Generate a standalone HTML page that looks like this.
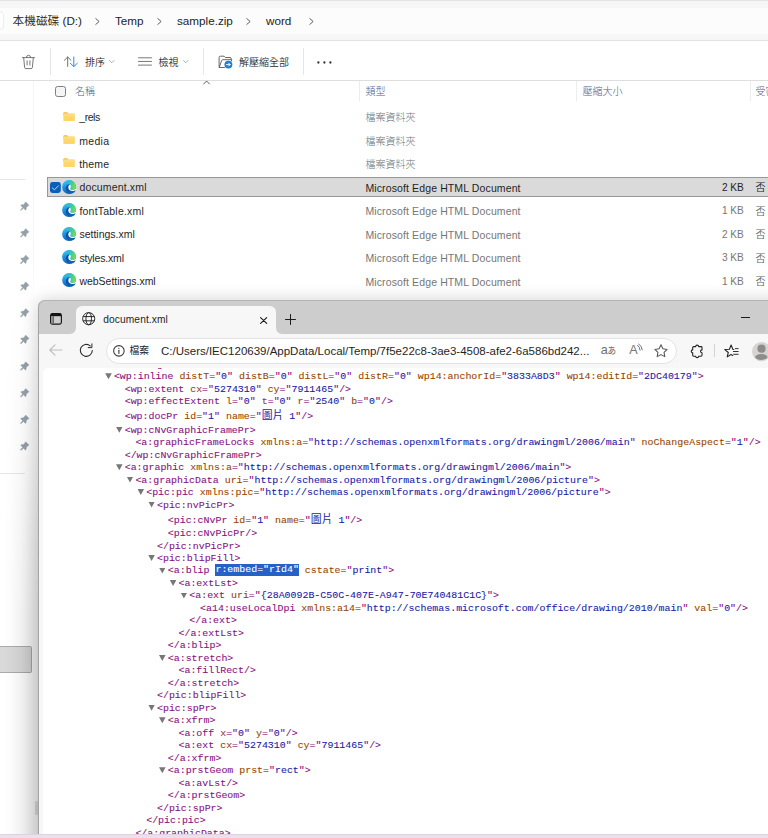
<!DOCTYPE html>
<html lang="zh-Hant">
<head>
<meta charset="utf-8">
<title>document.xml</title>
<style>
html,body{margin:0;padding:0}
body{width:768px;height:838px;overflow:hidden;position:relative;background:#fff;
  font-family:"Liberation Sans","Noto Sans CJK TC",sans-serif;color:#1b1b1b}
.abs{position:absolute}
.t{position:absolute;white-space:pre;line-height:14px}
svg{position:absolute;overflow:visible}

/* ---------- Explorer ---------- */
#addr{left:0;top:0;width:768px;height:41px;background:#f6f6f6}
#addr .topline{left:0;top:0;width:768px;height:1px;background:#e4e4e4}
#addr .box{left:-10px;top:7.5px;width:800px;height:26.5px;background:#fcfcfc}
#addr .pill{left:-8px;top:11px;width:12px;height:19px;background:#fff;border:1px solid #ededed;border-radius:4px;box-sizing:border-box}
#addr .botline{left:0;top:40.4px;width:768px;height:1px;background:#e3e3e3}
.crumb{font-size:11.7px;top:14.3px;color:#242424;font-weight:350}

#tb{left:0;top:41px;width:768px;height:39px;background:#fff}
#tb .botline{left:0;top:39px;width:768px;height:1px;background:#dedede}
.tbt{font-size:10px;top:15px;color:#2a2a2a;font-weight:350}
.vsep{width:1px;background:#e6e6e6;top:7px;height:27px}

#list{left:0;top:81px;width:768px;height:757px;background:#fff}
.hdr{font-size:10px;color:#506088;top:4.4px;font-weight:300}
.hsep{top:0;width:1.3px;height:20px;background:#ededed}
.fn{font-size:10.5px;letter-spacing:.2px;color:#262626}
.ft{font-size:10.5px;letter-spacing:.12px;color:#767676}
.fz{font-size:10.1px;color:#767676;text-align:right;width:40px}
.fld{font-size:10px;color:#727272;font-weight:300}

/* ---------- Edge ---------- */
#edge{left:38px;top:300px;width:760px;height:560px;background:#f7f7f7;border-radius:7px 0 0 0;
  box-shadow:0 0 17px rgba(0,0,0,.18)}
#tabstrip{left:0;top:0;width:760px;height:34px;background:#cdcdcd;border-radius:7px 0 0 0}
#tab{left:38.2px;top:6.2px;width:199.8px;height:28px;background:#f7f7f7;border-radius:6px 6px 0 0}
#page{left:5px;top:68px;width:760px;height:500px;background:#fff;border-radius:5px 0 0 0;overflow:hidden}
#url{left:68px;top:38px;width:571px;height:25.5px;background:#fff;border-radius:13px;box-sizing:border-box;border:1px solid #e3e3e3}
.xml{font-family:"Liberation Mono","Noto Sans CJK TC",monospace;font-size:9.93px;line-height:12.5px;white-space:pre;position:absolute;color:#881280;-webkit-text-stroke:.09px}
.xml .cj{font-size:10.85px;line-height:0;-webkit-text-stroke:0}
.xml .n{color:#994500}
.xml .v{color:#1a1aa6}
.xml .sel{background:#2561c6;color:#fff;display:inline-block;height:12px;line-height:12px;vertical-align:top;margin-top:-1.1px}
.xml .sel .n,.xml .sel .v{color:#fff}
.tri{position:absolute;width:6.6px;height:6px;background:#777;clip-path:polygon(0 0,100% 0,50% 100%)}
</style>
</head>
<body>

<!-- ================= Explorer address bar ================= -->
<div id="addr" class="abs">
  <div class="abs topline"></div>
  <div class="abs box"></div>
  <div class="abs pill"></div>
  <div class="abs botline"></div>
  <span class="t crumb" style="left:12.5px">本機磁碟 (D:)</span>
  <svg class="chev" style="left:95.2px;top:17.5px" width="5" height="7" viewBox="0 0 5 7" fill="none" stroke="#555" stroke-width="0.95" stroke-linecap="round" stroke-linejoin="round"><path d="M.8.6l3.3 2.9L.8 6.4"/></svg>
  <span class="t crumb" style="left:115px">Temp</span>
  <svg class="chev" style="left:157.3px;top:17.5px" width="5" height="7" viewBox="0 0 5 7" fill="none" stroke="#555" stroke-width="0.95" stroke-linecap="round" stroke-linejoin="round"><path d="M.8.6l3.3 2.9L.8 6.4"/></svg>
  <span class="t crumb" style="left:177px">sample.zip</span>
  <svg class="chev" style="left:246.3px;top:17.5px" width="5" height="7" viewBox="0 0 5 7" fill="none" stroke="#555" stroke-width="0.95" stroke-linecap="round" stroke-linejoin="round"><path d="M.8.6l3.3 2.9L.8 6.4"/></svg>
  <span class="t crumb" style="left:266px">word</span>
  <svg class="chev" style="left:309.3px;top:17.5px" width="5" height="7" viewBox="0 0 5 7" fill="none" stroke="#555" stroke-width="0.95" stroke-linecap="round" stroke-linejoin="round"><path d="M.8.6l3.3 2.9L.8 6.4"/></svg>
</div>

<!-- ================= Explorer toolbar ================= -->
<div id="tb" class="abs">
  <div class="abs botline"></div>
  
  <!-- trash -->
  <svg style="left:21px;top:13px" width="15" height="16" viewBox="0 0 15 16" fill="none" stroke="#6e6e6e" stroke-width=".95" stroke-linecap="round" stroke-linejoin="round">
    <path d="M1.5 3.6h12"/><path d="M5.4 3.4a2.1 2.1 0 0 1 4.2 0"/>
    <path d="M2.7 3.8l.9 9.6a1.3 1.3 0 0 0 1.3 1.2h5.2a1.3 1.3 0 0 0 1.3-1.2l.9-9.6"/>
    <path d="M6.1 6.8v4.2"/><path d="M8.9 6.8v4.2"/>
  </svg>
  <!-- sort -->
  <svg style="left:63px;top:15px" width="16" height="12" viewBox="0 0 16 12" fill="none" stroke-width=".95" stroke-linecap="round" stroke-linejoin="round">
    <path d="M4.7 10.4V1.1M1.4 4.3l3.3-3.3 3.3 3.3" stroke="#686868"/>
    <path d="M10.8 1v9.4M7.3 7.2l3.5 3.4 3.5-3.4" stroke="#2285dd"/>
  </svg>
  <svg style="left:108.6px;top:19px" width="5.5" height="3.7" viewBox="0 0 6 4" fill="none" stroke="#9c9c9c" stroke-width="0.9" stroke-linecap="round" stroke-linejoin="round"><path d="M.6.6L3 3l2.4-2.4"/></svg>
  <!-- view -->
  <svg style="left:138px;top:16px" width="14" height="9" viewBox="0 0 14 9" fill="none" stroke="#5e5e5e" stroke-width=".85" stroke-linecap="round"><path d="M.5.8h13M.5 4.45h13M.5 8.1h13"/></svg>
  <svg style="left:182.8px;top:19px" width="5.5" height="3.7" viewBox="0 0 6 4" fill="none" stroke="#9c9c9c" stroke-width="0.9" stroke-linecap="round" stroke-linejoin="round"><path d="M.6.6L3 3l2.4-2.4"/></svg>
  <!-- extract all -->
  <svg style="left:217.5px;top:14px" width="15" height="14" viewBox="0 0 15 14" fill="none" stroke-linejoin="round" stroke-linecap="round">
    <path d="M1.1 11.4V2.5A1.3 1.3 0 0 1 2.4 1.2h3.7l1.2 1.3h4.7a1.2 1.2 0 0 1 1.2 1.2v.9" stroke="#606060" stroke-width=".95"/>
    <path d="M1.3 12.3L3.7 5.4a1 1 0 0 1 .95-.7h9.2l-.5 1.4" stroke="#606060" stroke-width=".95"/>
    <path d="M1.3 12.5h5.2" stroke="#606060" stroke-width=".95"/>
    <circle cx="10.4" cy="9.6" r="3.95" fill="#1a7edb"/>
    <path d="M8.5 9.6h3.5M10.7 8.2l1.4 1.4-1.4 1.4" stroke="#fff" stroke-width=".95"/>
  </svg>
  <!-- more -->
  <svg style="left:317px;top:20px" width="15" height="3" viewBox="0 0 15 3"><circle cx="1.4" cy="1.5" r="1.15" fill="#333"/><circle cx="7.4" cy="1.5" r="1.15" fill="#333"/><circle cx="13.4" cy="1.5" r="1.15" fill="#333"/></svg>

  <div class="abs vsep" style="left:50px"></div>
  <span class="t tbt" style="left:85px">排序</span>
  <span class="t tbt" style="left:158.5px">檢視</span>
  <div class="abs vsep" style="left:203px"></div>
  <span class="t tbt" style="left:239px">解壓縮全部</span>
  <div class="abs vsep" style="left:303px"></div>
</div>

<!-- ================= Explorer file list ================= -->
<div id="list" class="abs">
  <div class="abs hsep" style="left:358.9px"></div><div class="abs hsep" style="left:575.7px"></div><div class="abs hsep" style="left:749.6px"></div>
  <div class="abs" style="left:55px;top:5px;width:11px;height:11px;box-sizing:border-box;border:1.05px solid #7e7e7e;border-radius:2.6px;background:#f5f5f5"></div>
  <span class="t hdr" style="left:75px">名稱</span>
  <span class="t hdr" style="left:365.5px">類型</span>
  <span class="t hdr" style="left:582.5px">壓縮大小</span>
  <span class="t hdr" style="left:755.5px">受密碼保護</span>
  <svg style="left:203.4px;top:-.6px" width="7.2" height="4.6" viewBox="0 0 7.2 4.6" fill="none" stroke="#5c5c5c" stroke-width="1" stroke-linecap="round" stroke-linejoin="round"><path d="M.7 4L3.6 1l2.9 3"/></svg>
  <div class="abs" style="left:46.8px;top:96px;width:740px;height:19.8px;box-sizing:border-box;background:#dadada;border:.9px solid #989898"></div>
  <svg style="left:50px;top:100.8px" width="10.8" height="11" viewBox="0 0 10.8 11"><rect width="10.8" height="11" rx="2.4" fill="#0b5fb9"/><path d="M2.4 6l2.1 1.75 3.9-3.95" fill="none" stroke="#e3ecf7" stroke-width=".85" stroke-linecap="round" stroke-linejoin="round"/></svg>
  <svg style="left:62.9px;top:30.6px" width="12.2" height="9.4" viewBox="0 0 13 10">
    <path d="M.4 1.2A.9.9 0 0 1 1.3.3h3.1l1.3 1.2H6V4H.4z" fill="#f2b632"/>
    <rect x=".4" y="1.6" width="12.2" height="8.1" rx=".9" fill="#ffd766"/>
    <rect x=".4" y="1.6" width="12.2" height="3" rx=".9" fill="#ffe08a" opacity=".7"/>
  </svg>
  <span class="t fn" style="left:79.3px;top:29.1px;letter-spacing:-0.45px">_rels</span>
  <span class="t fld" style="left:365.5px;top:30.1px">檔案資料夾</span>
  <svg style="left:62.9px;top:54px" width="12.2" height="9.4" viewBox="0 0 13 10">
    <path d="M.4 1.2A.9.9 0 0 1 1.3.3h3.1l1.3 1.2H6V4H.4z" fill="#f2b632"/>
    <rect x=".4" y="1.6" width="12.2" height="8.1" rx=".9" fill="#ffd766"/>
    <rect x=".4" y="1.6" width="12.2" height="3" rx=".9" fill="#ffe08a" opacity=".7"/>
  </svg>
  <span class="t fn" style="left:79.3px;top:52.5px;letter-spacing:0.28px">media</span>
  <span class="t fld" style="left:365.5px;top:53.5px">檔案資料夾</span>
  <svg style="left:62.9px;top:77.4px" width="12.2" height="9.4" viewBox="0 0 13 10">
    <path d="M.4 1.2A.9.9 0 0 1 1.3.3h3.1l1.3 1.2H6V4H.4z" fill="#f2b632"/>
    <rect x=".4" y="1.6" width="12.2" height="8.1" rx=".9" fill="#ffd766"/>
    <rect x=".4" y="1.6" width="12.2" height="3" rx=".9" fill="#ffe08a" opacity=".7"/>
  </svg>
  <span class="t fn" style="left:79.3px;top:75.9px;letter-spacing:0.16px">theme</span>
  <span class="t fld" style="left:365.5px;top:76.9px">檔案資料夾</span>
  <svg style="left:62.2px;top:98.8px" width="14" height="14" viewBox="0 0 14 14">
    <defs>
      <linearGradient id="ea98" x1=".25" y1="0" x2=".6" y2="1"><stop offset="0" stop-color="#3fc6f3"/><stop offset=".45" stop-color="#1b8fe0"/><stop offset="1" stop-color="#0d5cae"/></linearGradient>
      <linearGradient id="eb98" x1="0" y1=".35" x2="1" y2=".55"><stop offset="0" stop-color="#30b6ea"/><stop offset=".35" stop-color="#2fbad2"/><stop offset=".65" stop-color="#40cc98"/><stop offset="1" stop-color="#7be241"/></linearGradient>
      <linearGradient id="ec98" x1=".2" y1="0" x2=".8" y2="1"><stop offset="0" stop-color="#0b4a97"/><stop offset="1" stop-color="#1467bd"/></linearGradient>
    </defs>
    <circle cx="7" cy="7" r="6.9" fill="url(#ea98)"/>
    <path d="M8.2 4.6C5.5 4.4 3.6 6.6 3.9 9.2 4.2 12 7 14 10 13.4 12 13 13.2 11.6 13.6 10 12.6 10.8 11.2 11 10 11 7.6 10.8 6.2 9 6.4 7.3 6.5 6 7.2 5 8.2 4.6z" fill="url(#ec98)"/>
    <path d="M1.3 4.9C2.5 2 5.2 .100 8 .2 11.5.5 14 3.5 13.9 7 13.85 9 12.4 10 10.8 10 9 10 8.2 9.2 8.2 8.4 8.2 7.8 8.8 7.4 8.8 6.4 8.8 4.8 7.3 3.6 5.4 3.6 3.8 3.6 2.3 4.1 1.3 4.9z" fill="url(#eb98)"/>
    <path d="M8.25 8.4C8.25 9.25 9.1 10.05 10.8 10.05 11.6 10.05 12.5 9.8 13.3 9.1L14.3 8.9 14.3 10 13.7 9.9C12.7 10.8 11.2 11.05 10 11.05 7.6 10.85 6.15 9 6.35 7.3 6.45 6 7.15 5 8.15 4.55 8.6 5.1 8.85 5.8 8.85 6.4 8.85 7.4 8.25 7.8 8.25 8.4z" fill="#fff"/>
  </svg>
  <span class="t fn" style="left:79.4px;top:99.3px;letter-spacing:0.16px">document.xml</span>
  <span class="t ft" style="left:365.4px;top:100px;color:#1f1f1f">Microsoft Edge HTML Document</span>
  <span class="t fz" style="left:703.8px;top:100px;color:#1f1f1f">2 KB</span>
  <span class="t fld" style="left:755.5px;top:100.3px;color:#222;font-weight:350">否</span>
  <svg style="left:62.2px;top:122.2px" width="14" height="14" viewBox="0 0 14 14">
    <defs>
      <linearGradient id="ea122" x1=".25" y1="0" x2=".6" y2="1"><stop offset="0" stop-color="#3fc6f3"/><stop offset=".45" stop-color="#1b8fe0"/><stop offset="1" stop-color="#0d5cae"/></linearGradient>
      <linearGradient id="eb122" x1="0" y1=".35" x2="1" y2=".55"><stop offset="0" stop-color="#30b6ea"/><stop offset=".35" stop-color="#2fbad2"/><stop offset=".65" stop-color="#40cc98"/><stop offset="1" stop-color="#7be241"/></linearGradient>
      <linearGradient id="ec122" x1=".2" y1="0" x2=".8" y2="1"><stop offset="0" stop-color="#0b4a97"/><stop offset="1" stop-color="#1467bd"/></linearGradient>
    </defs>
    <circle cx="7" cy="7" r="6.9" fill="url(#ea122)"/>
    <path d="M8.2 4.6C5.5 4.4 3.6 6.6 3.9 9.2 4.2 12 7 14 10 13.4 12 13 13.2 11.6 13.6 10 12.6 10.8 11.2 11 10 11 7.6 10.8 6.2 9 6.4 7.3 6.5 6 7.2 5 8.2 4.6z" fill="url(#ec122)"/>
    <path d="M1.3 4.9C2.5 2 5.2 .100 8 .2 11.5.5 14 3.5 13.9 7 13.85 9 12.4 10 10.8 10 9 10 8.2 9.2 8.2 8.4 8.2 7.8 8.8 7.4 8.8 6.4 8.8 4.8 7.3 3.6 5.4 3.6 3.8 3.6 2.3 4.1 1.3 4.9z" fill="url(#eb122)"/>
    <path d="M8.25 8.4C8.25 9.25 9.1 10.05 10.8 10.05 11.6 10.05 12.5 9.8 13.3 9.1L14.3 8.9 14.3 10 13.7 9.9C12.7 10.8 11.2 11.05 10 11.05 7.6 10.85 6.15 9 6.35 7.3 6.45 6 7.15 5 8.15 4.55 8.6 5.1 8.85 5.8 8.85 6.4 8.85 7.4 8.25 7.8 8.25 8.4z" fill="#fff"/>
  </svg>
  <span class="t fn" style="left:79.4px;top:122.7px;letter-spacing:0.22px">fontTable.xml</span>
  <span class="t ft" style="left:365.4px;top:123.4px">Microsoft Edge HTML Document</span>
  <span class="t fz" style="left:703.8px;top:123.4px">1 KB</span>
  <span class="t fld" style="left:755.5px;top:123.7px;color:#636363;font-weight:350">否</span>
  <svg style="left:62.2px;top:145.6px" width="14" height="14" viewBox="0 0 14 14">
    <defs>
      <linearGradient id="ea145" x1=".25" y1="0" x2=".6" y2="1"><stop offset="0" stop-color="#3fc6f3"/><stop offset=".45" stop-color="#1b8fe0"/><stop offset="1" stop-color="#0d5cae"/></linearGradient>
      <linearGradient id="eb145" x1="0" y1=".35" x2="1" y2=".55"><stop offset="0" stop-color="#30b6ea"/><stop offset=".35" stop-color="#2fbad2"/><stop offset=".65" stop-color="#40cc98"/><stop offset="1" stop-color="#7be241"/></linearGradient>
      <linearGradient id="ec145" x1=".2" y1="0" x2=".8" y2="1"><stop offset="0" stop-color="#0b4a97"/><stop offset="1" stop-color="#1467bd"/></linearGradient>
    </defs>
    <circle cx="7" cy="7" r="6.9" fill="url(#ea145)"/>
    <path d="M8.2 4.6C5.5 4.4 3.6 6.6 3.9 9.2 4.2 12 7 14 10 13.4 12 13 13.2 11.6 13.6 10 12.6 10.8 11.2 11 10 11 7.6 10.8 6.2 9 6.4 7.3 6.5 6 7.2 5 8.2 4.6z" fill="url(#ec145)"/>
    <path d="M1.3 4.9C2.5 2 5.2 .100 8 .2 11.5.5 14 3.5 13.9 7 13.85 9 12.4 10 10.8 10 9 10 8.2 9.2 8.2 8.4 8.2 7.8 8.8 7.4 8.8 6.4 8.8 4.8 7.3 3.6 5.4 3.6 3.8 3.6 2.3 4.1 1.3 4.9z" fill="url(#eb145)"/>
    <path d="M8.25 8.4C8.25 9.25 9.1 10.05 10.8 10.05 11.6 10.05 12.5 9.8 13.3 9.1L14.3 8.9 14.3 10 13.7 9.9C12.7 10.8 11.2 11.05 10 11.05 7.6 10.85 6.15 9 6.35 7.3 6.45 6 7.15 5 8.15 4.55 8.6 5.1 8.85 5.8 8.85 6.4 8.85 7.4 8.25 7.8 8.25 8.4z" fill="#fff"/>
  </svg>
  <span class="t fn" style="left:79.4px;top:146.1px;letter-spacing:0px">settings.xml</span>
  <span class="t ft" style="left:365.4px;top:146.8px">Microsoft Edge HTML Document</span>
  <span class="t fz" style="left:703.8px;top:146.8px">2 KB</span>
  <span class="t fld" style="left:755.5px;top:147.1px;color:#636363;font-weight:350">否</span>
  <svg style="left:62.2px;top:169px" width="14" height="14" viewBox="0 0 14 14">
    <defs>
      <linearGradient id="ea169" x1=".25" y1="0" x2=".6" y2="1"><stop offset="0" stop-color="#3fc6f3"/><stop offset=".45" stop-color="#1b8fe0"/><stop offset="1" stop-color="#0d5cae"/></linearGradient>
      <linearGradient id="eb169" x1="0" y1=".35" x2="1" y2=".55"><stop offset="0" stop-color="#30b6ea"/><stop offset=".35" stop-color="#2fbad2"/><stop offset=".65" stop-color="#40cc98"/><stop offset="1" stop-color="#7be241"/></linearGradient>
      <linearGradient id="ec169" x1=".2" y1="0" x2=".8" y2="1"><stop offset="0" stop-color="#0b4a97"/><stop offset="1" stop-color="#1467bd"/></linearGradient>
    </defs>
    <circle cx="7" cy="7" r="6.9" fill="url(#ea169)"/>
    <path d="M8.2 4.6C5.5 4.4 3.6 6.6 3.9 9.2 4.2 12 7 14 10 13.4 12 13 13.2 11.6 13.6 10 12.6 10.8 11.2 11 10 11 7.6 10.8 6.2 9 6.4 7.3 6.5 6 7.2 5 8.2 4.6z" fill="url(#ec169)"/>
    <path d="M1.3 4.9C2.5 2 5.2 .100 8 .2 11.5.5 14 3.5 13.9 7 13.85 9 12.4 10 10.8 10 9 10 8.2 9.2 8.2 8.4 8.2 7.8 8.8 7.4 8.8 6.4 8.8 4.8 7.3 3.6 5.4 3.6 3.8 3.6 2.3 4.1 1.3 4.9z" fill="url(#eb169)"/>
    <path d="M8.25 8.4C8.25 9.25 9.1 10.05 10.8 10.05 11.6 10.05 12.5 9.8 13.3 9.1L14.3 8.9 14.3 10 13.7 9.9C12.7 10.8 11.2 11.05 10 11.05 7.6 10.85 6.15 9 6.35 7.3 6.45 6 7.15 5 8.15 4.55 8.6 5.1 8.85 5.8 8.85 6.4 8.85 7.4 8.25 7.8 8.25 8.4z" fill="#fff"/>
  </svg>
  <span class="t fn" style="left:79.4px;top:169.5px;letter-spacing:-0.16px">styles.xml</span>
  <span class="t ft" style="left:365.4px;top:170.2px">Microsoft Edge HTML Document</span>
  <span class="t fz" style="left:703.8px;top:170.2px">3 KB</span>
  <span class="t fld" style="left:755.5px;top:170.5px;color:#636363;font-weight:350">否</span>
  <svg style="left:62.2px;top:192.4px" width="14" height="14" viewBox="0 0 14 14">
    <defs>
      <linearGradient id="ea192" x1=".25" y1="0" x2=".6" y2="1"><stop offset="0" stop-color="#3fc6f3"/><stop offset=".45" stop-color="#1b8fe0"/><stop offset="1" stop-color="#0d5cae"/></linearGradient>
      <linearGradient id="eb192" x1="0" y1=".35" x2="1" y2=".55"><stop offset="0" stop-color="#30b6ea"/><stop offset=".35" stop-color="#2fbad2"/><stop offset=".65" stop-color="#40cc98"/><stop offset="1" stop-color="#7be241"/></linearGradient>
      <linearGradient id="ec192" x1=".2" y1="0" x2=".8" y2="1"><stop offset="0" stop-color="#0b4a97"/><stop offset="1" stop-color="#1467bd"/></linearGradient>
    </defs>
    <circle cx="7" cy="7" r="6.9" fill="url(#ea192)"/>
    <path d="M8.2 4.6C5.5 4.4 3.6 6.6 3.9 9.2 4.2 12 7 14 10 13.4 12 13 13.2 11.6 13.6 10 12.6 10.8 11.2 11 10 11 7.6 10.8 6.2 9 6.4 7.3 6.5 6 7.2 5 8.2 4.6z" fill="url(#ec192)"/>
    <path d="M1.3 4.9C2.5 2 5.2 .100 8 .2 11.5.5 14 3.5 13.9 7 13.85 9 12.4 10 10.8 10 9 10 8.2 9.2 8.2 8.4 8.2 7.8 8.8 7.4 8.8 6.4 8.8 4.8 7.3 3.6 5.4 3.6 3.8 3.6 2.3 4.1 1.3 4.9z" fill="url(#eb192)"/>
    <path d="M8.25 8.4C8.25 9.25 9.1 10.05 10.8 10.05 11.6 10.05 12.5 9.8 13.3 9.1L14.3 8.9 14.3 10 13.7 9.9C12.7 10.8 11.2 11.05 10 11.05 7.6 10.85 6.15 9 6.35 7.3 6.45 6 7.15 5 8.15 4.55 8.6 5.1 8.85 5.8 8.85 6.4 8.85 7.4 8.25 7.8 8.25 8.4z" fill="#fff"/>
  </svg>
  <span class="t fn" style="left:79.4px;top:192.9px;letter-spacing:-0.01px">webSettings.xml</span>
  <span class="t ft" style="left:365.4px;top:193.6px">Microsoft Edge HTML Document</span>
  <span class="t fz" style="left:703.8px;top:193.6px">1 KB</span>
  <span class="t fld" style="left:755.5px;top:193.9px;color:#636363;font-weight:350">否</span>
</div>

<!-- ================= Left nav pane remnants ================= -->
<div id="nav" class="abs" style="left:0;top:81px;width:34px;height:757px">
  <div class="abs" style="left:33px;top:0;width:1px;height:225px;background:linear-gradient(to bottom,#f5f5f5 0,#f5f5f5 80%,#fff 100%)"></div>
  <div class="abs" style="left:0;top:98px;width:24.5px;height:1px;background:#e6e6e6"></div>
  <div class="abs" style="left:0;top:392px;width:24.5px;height:1px;background:#e6e6e6"></div>
  <svg style="left:0;top:0" width="34" height="1"><path transform="translate(27.4 122.5) rotate(45) scale(1.14)" d="M-2.1 0L2.1 0L1.7 2.8L3 4.6L3 5.4L.5 5.4L.4 8.4L-.4 8.4L-.5 5.4L-3 5.4L-3 4.6L-1.7 2.8Z" fill="#95a0a8" stroke="#95a0a8" stroke-width=".25" stroke-linejoin="round"/></svg>
  <svg style="left:0;top:0" width="34" height="1"><path transform="translate(27.4 149.2) rotate(45) scale(1.14)" d="M-2.1 0L2.1 0L1.7 2.8L3 4.6L3 5.4L.5 5.4L.4 8.4L-.4 8.4L-.5 5.4L-3 5.4L-3 4.6L-1.7 2.8Z" fill="#95a0a8" stroke="#95a0a8" stroke-width=".25" stroke-linejoin="round"/></svg>
  <svg style="left:0;top:0" width="34" height="1"><path transform="translate(27.4 175.8) rotate(45) scale(1.14)" d="M-2.1 0L2.1 0L1.7 2.8L3 4.6L3 5.4L.5 5.4L.4 8.4L-.4 8.4L-.5 5.4L-3 5.4L-3 4.6L-1.7 2.8Z" fill="#95a0a8" stroke="#95a0a8" stroke-width=".25" stroke-linejoin="round"/></svg>
  <svg style="left:0;top:0" width="34" height="1"><path transform="translate(27.4 202.5) rotate(45) scale(1.14)" d="M-2.1 0L2.1 0L1.7 2.8L3 4.6L3 5.4L.5 5.4L.4 8.4L-.4 8.4L-.5 5.4L-3 5.4L-3 4.6L-1.7 2.8Z" fill="#95a0a8" stroke="#95a0a8" stroke-width=".25" stroke-linejoin="round"/></svg>
  <svg style="left:0;top:0" width="34" height="1"><path transform="translate(27.4 229.1) rotate(45) scale(1.14)" d="M-2.1 0L2.1 0L1.7 2.8L3 4.6L3 5.4L.5 5.4L.4 8.4L-.4 8.4L-.5 5.4L-3 5.4L-3 4.6L-1.7 2.8Z" fill="#95a0a8" stroke="#95a0a8" stroke-width=".25" stroke-linejoin="round"/></svg>
  <svg style="left:0;top:0" width="34" height="1"><path transform="translate(27.4 255.8) rotate(45) scale(1.14)" d="M-2.1 0L2.1 0L1.7 2.8L3 4.6L3 5.4L.5 5.4L.4 8.4L-.4 8.4L-.5 5.4L-3 5.4L-3 4.6L-1.7 2.8Z" fill="#95a0a8" stroke="#95a0a8" stroke-width=".25" stroke-linejoin="round"/></svg>
  <svg style="left:0;top:0" width="34" height="1"><path transform="translate(27.4 282.4) rotate(45) scale(1.14)" d="M-2.1 0L2.1 0L1.7 2.8L3 4.6L3 5.4L.5 5.4L.4 8.4L-.4 8.4L-.5 5.4L-3 5.4L-3 4.6L-1.7 2.8Z" fill="#95a0a8" stroke="#95a0a8" stroke-width=".25" stroke-linejoin="round"/></svg>
  <svg style="left:0;top:0" width="34" height="1"><path transform="translate(27.4 309.1) rotate(45) scale(1.14)" d="M-2.1 0L2.1 0L1.7 2.8L3 4.6L3 5.4L.5 5.4L.4 8.4L-.4 8.4L-.5 5.4L-3 5.4L-3 4.6L-1.7 2.8Z" fill="#95a0a8" stroke="#95a0a8" stroke-width=".25" stroke-linejoin="round"/></svg>
  <svg style="left:0;top:0" width="34" height="1"><path transform="translate(27.4 335.7) rotate(45) scale(1.14)" d="M-2.1 0L2.1 0L1.7 2.8L3 4.6L3 5.4L.5 5.4L.4 8.4L-.4 8.4L-.5 5.4L-3 5.4L-3 4.6L-1.7 2.8Z" fill="#95a0a8" stroke="#95a0a8" stroke-width=".25" stroke-linejoin="round"/></svg>
  <svg style="left:0;top:0" width="34" height="1"><path transform="translate(27.4 362.4) rotate(45) scale(1.14)" d="M-2.1 0L2.1 0L1.7 2.8L3 4.6L3 5.4L.5 5.4L.4 8.4L-.4 8.4L-.5 5.4L-3 5.4L-3 4.6L-1.7 2.8Z" fill="#95a0a8" stroke="#95a0a8" stroke-width=".25" stroke-linejoin="round"/></svg>
  <div class="abs" style="left:-2px;top:565.3px;width:33.6px;height:26.4px;box-sizing:border-box;background:#d9d9d9;border:.9px solid #ababab;border-radius:1.5px"></div>
</div>

<!-- Edge window drop shadow: extra growing shadow on the left side -->
<div class="abs" style="left:4px;top:292px;width:34.5px;height:546px;
  background:linear-gradient(to right,rgba(0,0,0,0) 0,rgba(0,0,0,.01) 18%,rgba(0,0,0,.05) 47%,rgba(0,0,0,.1) 76%,rgba(0,0,0,.135) 100%);
  -webkit-mask-image:linear-gradient(to bottom,rgba(0,0,0,0) 0,rgba(0,0,0,.1) 40px,rgba(0,0,0,.35) 110px,rgba(0,0,0,.6) 180px,rgba(0,0,0,.85) 250px,#000 330px);
  mask-image:linear-gradient(to bottom,rgba(0,0,0,0) 0,rgba(0,0,0,.1) 40px,rgba(0,0,0,.35) 110px,rgba(0,0,0,.6) 180px,rgba(0,0,0,.85) 250px,#000 330px)"></div>
<div class="abs" style="left:35.2px;top:801px;width:2.8px;height:14px;background:rgba(0,0,0,.11);border-radius:1px"></div>
<!-- ================= Edge window ================= -->
<div id="edge" class="abs">
  <div id="tabstrip" class="abs"></div>
  <div id="tab" class="abs"></div>
  
  <!-- inverse corners of tab -->
  <svg style="left:32.2px;top:28px" width="6" height="6" viewBox="0 0 6 6"><path d="M6 0v6H0A6 6 0 0 0 6 0z" fill="#f7f7f7"/></svg>
  <svg style="left:238px;top:28px" width="6" height="6" viewBox="0 0 6 6"><path d="M0 0v6h6A6 6 0 0 1 0 0z" fill="#f7f7f7"/></svg>
  <!-- tab actions icon -->
  <svg style="left:11.7px;top:13.3px" width="12" height="11.7" viewBox="0 0 12 11.7" fill="none" stroke="#141414">
    <rect x=".6" y=".6" width="10.8" height="10.5" rx="1.9" stroke-width="1.15"/>
    <path d="M1 1.9h10" stroke-width="2.6"/>
    <rect x="1.2" y="3.3" width="2.1" height="7.2" fill="#8e8e8e" stroke="none"/>
    <path d="M3.5 3.2v7.4" stroke-width=".7" stroke="#444"/>
  </svg>
  <!-- globe -->
  <svg style="left:44.1px;top:12.4px" width="13.4" height="13.4" viewBox="0 0 14 14" fill="none" stroke="#262626" stroke-width="1.02">
    <circle cx="7" cy="7" r="6.35"/><ellipse cx="7" cy="7" rx="2.9" ry="6.35"/><path d="M1.2 4.8h11.6M1.2 9.2h11.6"/>
  </svg>
  <span class="t" style="left:65.3px;top:12.9px;font-size:10.2px;letter-spacing:.1px;color:#1f1f1f">document.xml</span>
  <!-- tab close -->
  <svg style="left:221.6px;top:16.8px" width="7.3" height="7" viewBox="0 0 7.3 7" stroke="#1b1b1b" stroke-width="1.15" stroke-linecap="round"><path d="M.6.6l6.1 5.8M6.7.600L.6 6.4"/></svg>
  <!-- new tab -->
  <svg style="left:247px;top:13.5px" width="11" height="11" viewBox="0 0 11 11" stroke="#1b1b1b" stroke-width="1" stroke-linecap="round"><path d="M5.5.500v10M.5 5.5h10"/></svg>
  <!-- minimize -->
  <div class="abs" style="left:703px;top:16.6px;width:9px;height:1px;background:#1b1b1b"></div>
  <!-- back -->
  <svg style="left:11px;top:44px" width="13.5" height="12" viewBox="0 0 13.5 12" fill="none" stroke="#bdbdbd" stroke-width="1.1" stroke-linecap="round" stroke-linejoin="round"><path d="M13 6H.8M6 .8L.8 6 6 11.2"/></svg>
  <!-- refresh -->
  <svg style="left:40.5px;top:43px" width="14.5" height="14.5" viewBox="0 0 14.5 14.5" fill="none" stroke="#2a2a2a" stroke-width="1.1" stroke-linecap="round" stroke-linejoin="round"><path d="M13.3 7.5a6 6 0 1 1-2.1-4.7"/><path d="M12.9.9v3.7H9.2" stroke-width="1"/></svg>
  <!-- extensions (puzzle) -->
  <svg style="left:652px;top:43.7px" width="13.5" height="14.5" viewBox="0 0 13.5 14.5" fill="none" stroke="#222" stroke-width="1.08" stroke-linejoin="round"><path d="M3.6 2.6H5.7A1.45 1.45 0 0 1 8.6 2.6H11.1A.9.9 0 0 1 12 3.5V5.9A1.45 1.45 0 0 0 12 8.8V11.3A.9.9 0 0 1 11.1 12.2H8.6A1.45 1.45 0 0 1 5.7 12.2H3.6A.9.9 0 0 1 2.7 11.3V8.8A1.45 1.45 0 0 1 2.7 5.9V3.5A.9.9 0 0 1 3.6 2.6Z"/></svg>
  <div class="abs" style="left:676px;top:44.3px;width:1px;height:13px;background:#d4d4d4"></div>
  <!-- favorites -->
  <svg style="left:685.8px;top:44px" width="16" height="14" viewBox="0 0 16 14" fill="none" stroke="#222" stroke-width="1.05" stroke-linejoin="round" stroke-linecap="round"><path d="M9.9 5.4L8.8 5.25 7.1 1 5.4 5.25.8 5.6 4.3 8.5 3.2 12.9 7.1 10.5 8.9 11.6"/><path d="M11.4 4.6h2.8M9.4 7.5h4.8M9.7 10.3h4.5" stroke="#333" stroke-width="1"/></svg>
  <!-- avatar -->
  <svg style="left:713.8px;top:41.8px" width="19.2" height="19.2" viewBox="0 0 19.2 19.2"><circle cx="9.6" cy="9.6" r="9.6" fill="#d6d4d2"/><circle cx="9.5" cy="6.7" r="4.1" fill="#8f8b89"/><ellipse cx="9.3" cy="15" rx="6.2" ry="2.9" fill="#8f8b89"/></svg>

  <div id="url" class="abs"></div>
  
  <!-- info icon -->
  <svg style="left:75.1px;top:45px" width="11.8" height="11.8" viewBox="0 0 11 11" fill="none" stroke="#3a3a3a" stroke-width="1"><circle cx="5.5" cy="5.5" r="4.9"/><path d="M5.5 4.9v3" stroke-linecap="round"/><circle cx="5.5" cy="3.2" r=".55" fill="#444" stroke="none"/></svg>
  <span class="t" style="left:91.4px;top:44px;font-size:9.8px;color:#222">檔案</span>
  <span class="t" style="left:123px;top:43.5px;font-size:11.5px;color:#1f1f1f">C:/Users/IEC120639/AppData/Local/Temp/7f5e22c8-3ae3-4508-afe2-6a586bd242...</span>
  <!-- translate aあ -->
  <span class="t" style="left:562.8px;top:43px;font-size:12.6px;color:#707070">a</span><span class="t" style="left:569.4px;top:44.4px;font-size:8.6px;color:#5a5a5a">あ</span>
  <!-- read aloud -->
  <span class="t" style="left:591.3px;top:43.4px;font-size:12.6px;color:#757575">A</span>
  <svg style="left:597.5px;top:43px" width="8" height="9" viewBox="0 0 8 9" fill="none" stroke="#6a6a6a" stroke-width=".95" stroke-linecap="round"><path d="M1.6 2.3Q3.8 3.7 4.1 7.2M2.7 1Q6 2.9 6.3 6.8"/></svg>
  <!-- star -->
  <svg style="left:616.4px;top:44.3px" width="14" height="13.5" viewBox="0 0 13.5 13" fill="none" stroke="#555" stroke-width="1" stroke-linejoin="round"><path d="M6.75.8l1.85 3.8 4.1.6-3 2.9.7 4.1-3.65-1.95L3.1 12.2l.7-4.1-3-2.9 4.1-.6z"/></svg>

  <div id="page" class="abs">
    <div class="xml" style="left:60.1px;top:-9.22px">&lt;w:drawing&gt;</div>
    <i class="tri" style="left:62.2px;top:5.3px"></i>
    <div class="xml" style="left:70.9px;top:3.26px">&lt;wp:inline <span class="n">distT</span>="<span class="v">0</span>" <span class="n">distB</span>="<span class="v">0</span>" <span class="n">distL</span>="<span class="v">0</span>" <span class="n">distR</span>="<span class="v">0</span>" <span class="n">wp14:anchorId</span>="<span class="v">3833A8D3</span>" <span class="n">wp14:editId</span>="<span class="v">2DC40179</span>"&gt;</div>
    <div class="xml" style="left:81.7px;top:15.74px">&lt;wp:extent <span class="n">cx</span>="<span class="v">5274310</span>" <span class="n">cy</span>="<span class="v">7911465</span>"/&gt;</div>
    <div class="xml" style="left:81.7px;top:28.22px">&lt;wp:effectExtent <span class="n">l</span>="<span class="v">0</span>" <span class="n">t</span>="<span class="v">0</span>" <span class="n">r</span>="<span class="v">2540</span>" <span class="n">b</span>="<span class="v">0</span>"/&gt;</div>
    <div class="xml" style="left:81.7px;top:43.2px">&lt;wp:docPr <span class="n">id</span>="<span class="v">1</span>" <span class="n">name</span>="<span class="v"><span class="cj">圖片</span> 1</span>"/&gt;</div>
    <i class="tri" style="left:73px;top:58.7px"></i>
    <div class="xml" style="left:81.7px;top:56.68px">&lt;wp:cNvGraphicFramePr&gt;</div>
    <div class="xml" style="left:92.4px;top:69.16px">&lt;a:graphicFrameLocks <span class="n">xmlns:a</span>="<span class="v">http://schemas.openxmlformats.org/drawingml/2006/main</span>" <span class="n">noChangeAspect</span>="<span class="v">1</span>"/&gt;</div>
    <div class="xml" style="left:81.7px;top:81.64px">&lt;/wp:cNvGraphicFramePr&gt;</div>
    <i class="tri" style="left:73px;top:96.2px"></i>
    <div class="xml" style="left:81.7px;top:94.12px">&lt;a:graphic <span class="n">xmlns:a</span>="<span class="v">http://schemas.openxmlformats.org/drawingml/2006/main</span>"&gt;</div>
    <i class="tri" style="left:83.7px;top:108.6px"></i>
    <div class="xml" style="left:92.4px;top:106.6px">&lt;a:graphicData <span class="n">uri</span>="<span class="v">http://schemas.openxmlformats.org/drawingml/2006/picture</span>"&gt;</div>
    <i class="tri" style="left:94.5px;top:121.1px"></i>
    <div class="xml" style="left:103.2px;top:119.08px">&lt;pic:pic <span class="n">xmlns:pic</span>="<span class="v">http://schemas.openxmlformats.org/drawingml/2006/picture</span>"&gt;</div>
    <i class="tri" style="left:105.3px;top:133.6px"></i>
    <div class="xml" style="left:114px;top:131.56px">&lt;pic:nvPicPr&gt;</div>
    <div class="xml" style="left:124.8px;top:146.54px">&lt;pic:cNvPr <span class="n">id</span>="<span class="v">1</span>" <span class="n">name</span>="<span class="v"><span class="cj">圖片</span> 1</span>"/&gt;</div>
    <div class="xml" style="left:124.8px;top:160.02px">&lt;pic:cNvPicPr/&gt;</div>
    <div class="xml" style="left:114px;top:172.5px">&lt;/pic:nvPicPr&gt;</div>
    <i class="tri" style="left:105.3px;top:187px"></i>
    <div class="xml" style="left:114px;top:184.98px">&lt;pic:blipFill&gt;</div>
    <i class="tri" style="left:116px;top:199.5px"></i>
    <div class="xml" style="left:124.8px;top:197.46px">&lt;a:blip <span class="sel"><span class="n">r:embed</span>="<span class="v">rId4</span>"</span> <span class="n">cstate</span>="<span class="v">print</span>"&gt;</div>
    <i class="tri" style="left:126.8px;top:212px"></i>
    <div class="xml" style="left:135.5px;top:209.94px">&lt;a:extLst&gt;</div>
    <i class="tri" style="left:137.6px;top:224.5px"></i>
    <div class="xml" style="left:146.3px;top:222.42px">&lt;a:ext <span class="n">uri</span>="<span class="v">{28A0092B-C50C-407E-A947-70E740481C1C}</span>"&gt;</div>
    <div class="xml" style="left:157.1px;top:234.9px">&lt;a14:useLocalDpi <span class="n">xmlns:a14</span>="<span class="v">http://schemas.microsoft.com/office/drawing/2010/main</span>" <span class="n">val</span>="<span class="v">0</span>"/&gt;</div>
    <div class="xml" style="left:146.3px;top:247.38px">&lt;/a:ext&gt;</div>
    <div class="xml" style="left:135.5px;top:259.86px">&lt;/a:extLst&gt;</div>
    <div class="xml" style="left:124.8px;top:272.34px">&lt;/a:blip&gt;</div>
    <i class="tri" style="left:116px;top:286.9px"></i>
    <div class="xml" style="left:124.8px;top:284.82px">&lt;a:stretch&gt;</div>
    <div class="xml" style="left:135.5px;top:297.3px">&lt;a:fillRect/&gt;</div>
    <div class="xml" style="left:124.8px;top:309.78px">&lt;/a:stretch&gt;</div>
    <div class="xml" style="left:114px;top:322.26px">&lt;/pic:blipFill&gt;</div>
    <i class="tri" style="left:105.3px;top:336.8px"></i>
    <div class="xml" style="left:114px;top:334.74px">&lt;pic:spPr&gt;</div>
    <i class="tri" style="left:116px;top:349.3px"></i>
    <div class="xml" style="left:124.8px;top:347.22px">&lt;a:xfrm&gt;</div>
    <div class="xml" style="left:135.5px;top:359.7px">&lt;a:off <span class="n">x</span>="<span class="v">0</span>" <span class="n">y</span>="<span class="v">0</span>"/&gt;</div>
    <div class="xml" style="left:135.5px;top:372.18px">&lt;a:ext <span class="n">cx</span>="<span class="v">5274310</span>" <span class="n">cy</span>="<span class="v">7911465</span>"/&gt;</div>
    <div class="xml" style="left:124.8px;top:384.66px">&lt;/a:xfrm&gt;</div>
    <i class="tri" style="left:116px;top:399.2px"></i>
    <div class="xml" style="left:124.8px;top:397.14px">&lt;a:prstGeom <span class="n">prst</span>="<span class="v">rect</span>"&gt;</div>
    <div class="xml" style="left:135.5px;top:409.62px">&lt;a:avLst/&gt;</div>
    <div class="xml" style="left:124.8px;top:422.1px">&lt;/a:prstGeom&gt;</div>
    <div class="xml" style="left:114px;top:434.58px">&lt;/pic:spPr&gt;</div>
    <div class="xml" style="left:103.2px;top:447.06px">&lt;/pic:pic&gt;</div>
    <div class="xml" style="left:92.4px;top:459.54px">&lt;/a:graphicData&gt;</div>
  </div>
  <div class="abs" style="left:0;top:0;width:760px;height:560px;box-sizing:border-box;border-radius:7px 0 0 0;border-left:.8px solid #a3a3a3;border-top:.8px solid #b4b4b4"></div>
</div>

<!-- bottom strip (window underneath) -->
<div class="abs" style="left:0;top:834.4px;width:768px;height:4px;background:#eedfee;border-top:.8px solid #dcd4dc;box-sizing:border-box"></div>

</body>
</html>
